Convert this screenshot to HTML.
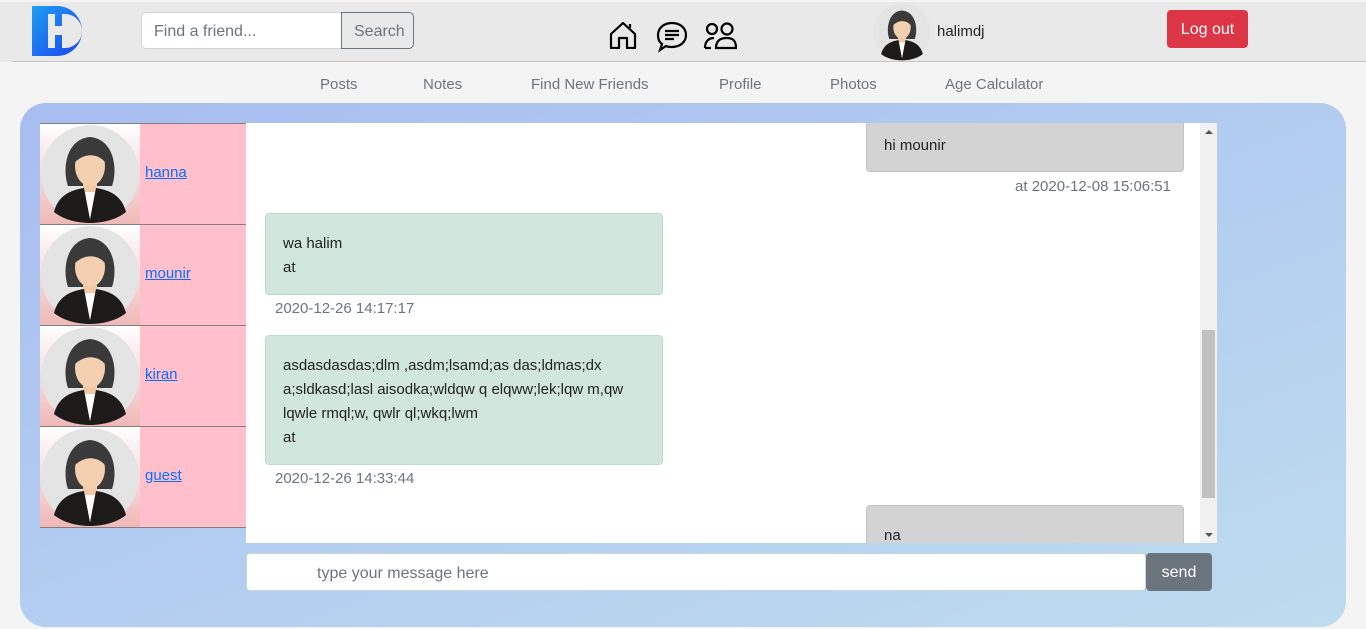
<!DOCTYPE html>
<html><head><meta charset="utf-8">
<style>
*{box-sizing:border-box;margin:0;padding:0}
body{width:1366px;height:629px;overflow:hidden;background:#f4f4f4;font-family:"Liberation Sans",sans-serif;position:relative}
.hdr{position:absolute;left:0;top:0;width:1366px;height:62px;background:#e9e9e9;border-top:2px solid #f4f4f4}
.hdr:after{content:"";position:absolute;left:12px;right:0;bottom:0;height:1px;background:#c8c8c8}
.abs{position:absolute}
.nav{position:absolute;top:76px;font-size:15px;color:#6c757d}
.box{position:absolute;left:20px;top:103px;width:1326px;height:524px;border-radius:26px;background:linear-gradient(160deg,#a8bdf0 0%,#b2cdf0 50%,#bddcee 100%)}
.fr{position:absolute;left:40px;width:206px;height:102px;background:#ffc0cb;border-top:1px solid #808080}
.fr .av{position:absolute;left:0;top:0;width:100px;height:100px;background:linear-gradient(#fff,#f0b8b8)}
.fr a{position:absolute;left:105px;top:40px;color:#0d6efd;font-size:15px;text-decoration:underline}
.chat{position:absolute;left:246px;top:123px;width:971px;height:420px;background:#fff;overflow:hidden}
.sb{position:absolute;right:0;top:0;width:17px;height:420px;background:#f1f1f1}
.bub{position:absolute;font-size:15px;line-height:24px;color:#222;padding:0 17px;border-radius:4px}
.g{background:#d1e7dd;border:1px solid #badbcc}
.gr{background:#d3d3d3;border:1px solid #c3c3c3}
.ts{position:absolute;font-size:15px;color:#6c757d}
</style></head><body>
<div class="hdr"></div>
<svg class="abs" style="left:32px;top:6px" width="50" height="50" viewBox="0 0 50 50"><defs><linearGradient id="lg" x1="0" y1="0" x2="1" y2="1"><stop offset="0" stop-color="#1e9ef0"/><stop offset="1" stop-color="#1a44f0"/></linearGradient></defs><path d="M0 0H25A25 25 0 0 1 25 50H0Z" fill="url(#lg)"/><path d="M16 8H23V20H30V8H33A17 17 0 0 1 33 42H30V29H23V42H16Z" fill="#e9e9e9"/></svg>
<div class="abs" style="left:141px;top:12px;width:201px;height:37px;background:#fff;border:1px solid #ced4da;border-radius:5px 0 0 5px;font-size:16px;color:#6c757d;padding:10px 12px">Find a friend...</div>
<div class="abs" style="left:341px;top:12px;width:73px;height:37px;border:1px solid #6c757d;border-radius:0 5px 5px 0;font-size:16px;color:#6c757d;padding:10px 12px;background:#e9e9e9">Search</div>
<svg class="abs" style="left:609px;top:21px" width="28" height="28" viewBox="0 0 28 28" fill="none" stroke="#000" stroke-width="2.2" stroke-linejoin="round"><path d="M2 13L14 2L26 13V27H18V17H10V27H2V13Z"/><path d="M21 3V7"/></svg>
<svg class="abs" style="left:655px;top:21px" width="34" height="32" viewBox="0 0 34 32" fill="none" stroke="#000" stroke-width="2.2"><path d="M17 2C25 2 31 7 31 14C31 21 25 26 17 26C15 26 13 26 11 25L5 29L7 23C4 21 3 18 3 14C3 7 9 2 17 2Z"/><path d="M10 10H24M10 14H24M10 18H19"/></svg>
<svg class="abs" style="left:703px;top:22px" width="34" height="28" viewBox="0 0 34 28" fill="none" stroke="#000" stroke-width="2.2"><circle cx="9" cy="7" r="5"/><circle cx="24" cy="7" r="5.5"/><path d="M2 26C2 20 5 16 11 16M13 26C13 19 17 16 24 16C31 16 33 20 33 26Z"/><path d="M2 26H8"/></svg>
<svg class="abs" style="left:873px;top:3px" width="58" height="58" viewBox="0 0 100 100"><use href="#avt"/></svg>
<div class="abs" style="left:937px;top:23px;font-size:15px;color:#222">halimdj</div>
<div class="abs" style="left:1167px;top:10px;width:81px;height:38px;background:#dc3545;border-radius:4px;color:#fff;font-size:16px;text-align:center;line-height:40px">Log out</div>
<div class="nav" style="left:320px">Posts</div>
<div class="nav" style="left:423px">Notes</div>
<div class="nav" style="left:531px">Find New Friends</div>
<div class="nav" style="left:719px">Profile</div>
<div class="nav" style="left:830px">Photos</div>
<div class="nav" style="left:945px">Age Calculator</div>
<svg width="0" height="0" style="position:absolute"><defs><g id="avt"><circle cx="50" cy="50" r="49" fill="#e4e4e4"/><path d="M28 62C22 45 26 15 50 13C74 15 78 45 72 62Z" fill="#3a3a3a"/><rect x="43" y="55" width="14" height="18" fill="#f2c9a5"/><ellipse cx="50" cy="42" rx="15" ry="20" fill="#f5d0b0"/><path d="M35 38C36 24 46 20 56 22C62 26 64 32 65 38C58 30 46 28 35 38Z" fill="#3a3a3a"/><path d="M14 88C18 72 30 66 44 64L50 95L56 64C70 66 82 72 86 88C76 96 62 99 50 99C38 99 24 96 14 88Z" fill="#1d1a1a"/><path d="M45 68L50 95L55 68Z" fill="#fff"/></g></defs></svg>
<div class="box"></div>
<div class="fr" style="top:123px"><div class="av"><svg width="100" height="100"><use href="#avt"/></svg></div><a>hanna</a></div>
<div class="fr" style="top:224px"><div class="av"><svg width="100" height="100"><use href="#avt"/></svg></div><a>mounir</a></div>
<div class="fr" style="top:325px"><div class="av"><svg width="100" height="100"><use href="#avt"/></svg></div><a>kiran</a></div>
<div class="fr" style="top:426px;border-bottom:1px solid #808080"><div class="av"><svg width="100" height="100"><use href="#avt"/></svg></div><a>guest</a></div>
<div class="chat">
<div class="bub gr" style="left:620px;top:-10px;width:318px;height:59px;padding-top:20px">hi mounir</div>
<div class="ts" style="left:763px;top:55px;width:162px;text-align:right">at 2020-12-08 15:06:51</div>
<div class="bub g" style="left:19px;top:90px;width:398px;height:82px;padding-top:18px">wa halim<br>at</div>
<div class="ts" style="left:29px;top:177px">2020-12-26 14:17:17</div>
<div class="bub g" style="left:19px;top:212px;width:398px;height:130px;padding-top:18px">asdasdasdas;dlm ,asdm;lsamd;as das;ldmas;dx<br>a;sldkasd;lasl aisodka;wldqw q elqww;lek;lqw m,qw<br>lqwle rmql;w, qwlr ql;wkq;lwm<br>at</div>
<div class="ts" style="left:29px;top:347px">2020-12-26 14:33:44</div>
<div class="bub gr" style="left:620px;top:382px;width:318px;height:60px;padding-top:18px">na</div>
<div class="sb"><div style="position:absolute;left:2px;top:207px;width:13px;height:168px;background:#c1c1c1"></div>
<div style="position:absolute;left:5px;top:7px;border:4px solid transparent;border-bottom:4px solid #555;border-top:0"></div>
<div style="position:absolute;left:5px;bottom:6px;border:4px solid transparent;border-top:4px solid #555;border-bottom:0"></div></div>
</div>
<div class="abs" style="left:246px;top:553px;width:900px;height:38px;background:#fff;border:1px solid #ced4da;border-radius:4px;font-size:16px;color:#6c757d;padding:11px 70px">type your message here</div>
<div class="abs" style="left:1146px;top:553px;width:66px;height:38px;background:#6c757d;border-radius:4px;color:#fff;font-size:16px;text-align:center;line-height:40px">send</div>
</body></html>
